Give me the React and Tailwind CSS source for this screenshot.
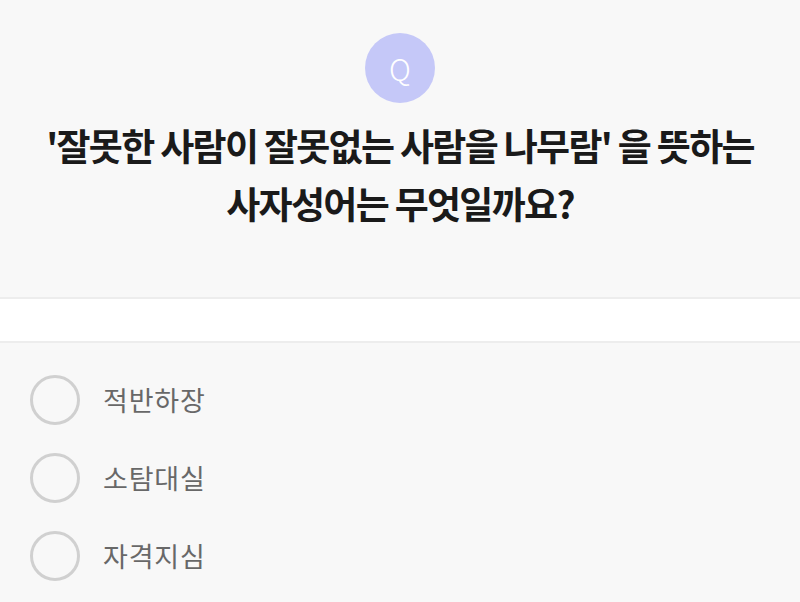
export default function App() {
  const options = ['적반하장', '소탐대실', '자격지심'];
  return (
    <div
      className="w-[800px] h-[602px] overflow-hidden bg-[#f8f8f8]"
      style={{ fontFamily: '"Noto Sans CJK KR", "Noto Sans", sans-serif' }}
    >
      <div className="h-[297px] flex flex-col items-center pt-[33px]">
        <div className="w-[70px] h-[70px] rounded-full bg-[#c5c8f8] flex items-center justify-center text-white text-[30px] font-light">
          Q
        </div>
        <h1 className="mt-[13px] text-center text-[37px] leading-[58px] font-bold text-[#1a1a1a] tracking-[-1.7px]">
          '잘못한 사람이 잘못없는 사람을 나무람' 을 뜻하는
          <br />
          사자성어는 무엇일까요?
        </h1>
      </div>
      <div className="h-[46px] bg-white border-y-2 border-[#ededed]" />
      <div className="flex flex-col gap-[28px] pt-[32px] pl-[30px]">
        {options.map((o) => (
          <div key={o} className="flex items-center h-[50px]">
            <div className="w-[50px] h-[50px] rounded-full border-[3px] border-[#d0d0d0]" />
            <span className="ml-[23px] text-[27px] text-[#686868] tracking-[0.8px]">{o}</span>
          </div>
        ))}
      </div>
    </div>
  );
}
